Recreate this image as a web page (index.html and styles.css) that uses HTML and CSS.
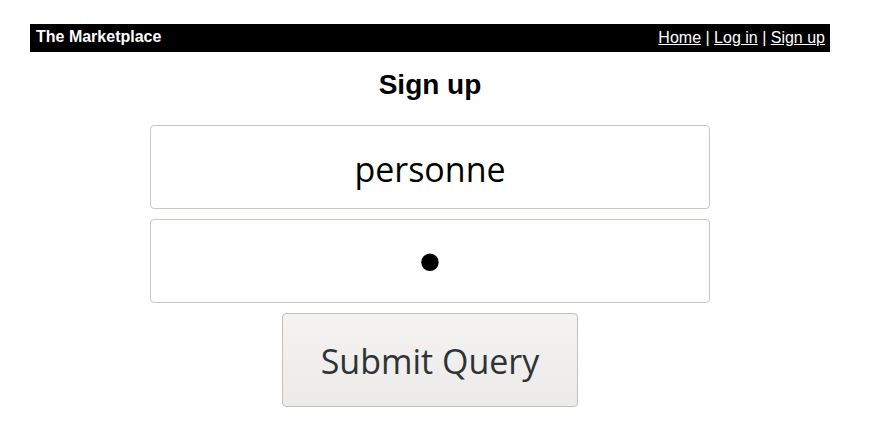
FILE: index.html
```html
<!DOCTYPE html>
<html>
<head>
<meta charset="utf-8">
<link rel="stylesheet" href="styles.css">
</head>
<body>
<div class="page">
  <div class="topbar">
    <span class="brand">The Marketplace</span>
    <span class="nav"><a href="#">Home</a> | <a href="#">Log in</a> | <a href="#">Sign up</a></span>
  </div>
  <h1 class="title">Sign up</h1>
  <form class="form">
    <input class="field" type="text" value="personne">
    <input class="field secret" type="password" value="a">
    <input class="submit" type="submit" value="Submit Query">
  </form>
</div>
</body>
</html>
```
FILE: styles.css
```css
html, body {
  margin: 0;
  padding: 0;
  background: #fff;
}
.page {
  width: 800px;
  margin: 24px 0 0 30px;
  font-family: "Liberation Sans", Arial, sans-serif;
}
.topbar {
  height: 28px;
  background: #000;
  color: #fff;
  display: flex;
  justify-content: space-between;
  align-items: center;
  padding: 0 5px 0 6px;
}
.brand {
  font-weight: bold;
  font-size: 16px;
  margin-top: -2px;
}
.nav {
  font-size: 16px;
}
.nav a {
  color: #fff;
  text-decoration: underline;
}
.title {
  margin: 18px 0 25px;
  text-align: center;
  font-size: 28px;
  line-height: 30px;
  font-weight: bold;
  color: #000;
}
.form {
  display: flex;
  flex-direction: column;
  align-items: center;
  gap: 10px;
}
.field {
  box-sizing: border-box;
  width: 560px;
  height: 84px;
  border: 1px solid #cdc7c2;
  border-radius: 4px;
  background: #fff;
  font-family: "Open Sans", "Noto Sans", sans-serif;
  font-size: 34px;
  color: #000;
  text-align: center;
  padding: 3px 10px 0;
  outline: none;
}
.secret {
  font-family: "DejaVu Sans", sans-serif;
  font-size: 60px;
  padding-top: 6px;
}
.submit {
  box-sizing: border-box;
  width: 296px;
  height: 94px;
  border: 1px solid #c3bfbb;
  border-radius: 4px;
  background: linear-gradient(#f4f3f2, #edebe9);
  font-family: "Open Sans", "Noto Sans", sans-serif;
  font-size: 34px;
  color: #2e3436;
  padding: 2px 0 0;
}
```
